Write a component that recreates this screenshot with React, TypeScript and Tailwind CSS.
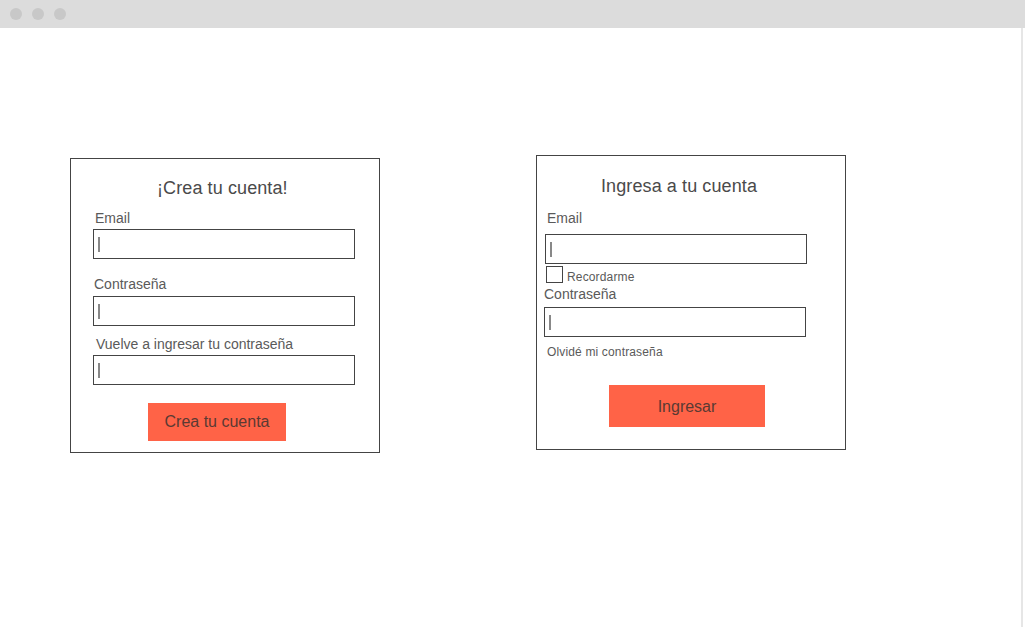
import React from "react";

function Field({ className }: { className: string }) {
  return (
    <div className={`h-[30px] w-[262px] border border-[#444] bg-white flex items-center ${className}`}>
      <div className="ml-[4px] h-[15px] w-[1.5px] bg-[#888]" />
    </div>
  );
}

export default function App() {
  return (
    <div className="w-[1025px] h-[627px] overflow-hidden bg-white font-['Liberation_Sans',Arial,sans-serif] flex flex-col">
      <div className="h-[28px] bg-[#dcdcdc] flex items-center gap-[10px] pl-[10px] shrink-0">
        <div className="w-[12px] h-[12px] rounded-full bg-[#c8c8c8]" />
        <div className="w-[12px] h-[12px] rounded-full bg-[#c8c8c8]" />
        <div className="w-[12px] h-[12px] rounded-full bg-[#c8c8c8]" />
      </div>
      <div className="flex-1 w-[1023px] border-r-2 border-[#e6e6e6] flex items-start pl-[70px]">
        {/* Register card */}
        <div className="mt-[130px] w-[310px] h-[295px] border border-[#444] flex flex-col items-start">
          <div className="mt-[19px] ml-[86px] text-[18px] leading-[20px] tracking-[0.1px] text-[#4a4a4a]">¡Crea tu cuenta!</div>
          <div className="mt-[12px] ml-[24px] text-[14px] leading-[16px] text-[#5a5a5a]">Email</div>
          <Field className="mt-[3px] ml-[22px]" />
          <div className="mt-[17px] ml-[23px] text-[14px] leading-[16px] text-[#5a5a5a]">Contraseña</div>
          <Field className="mt-[4px] ml-[22px]" />
          <div className="mt-[10px] ml-[25px] text-[14px] leading-[16px] text-[#5a5a5a]">Vuelve a ingresar tu contraseña</div>
          <Field className="mt-[3px] ml-[22px]" />
          <div className="mt-[18px] ml-[77px] w-[138px] h-[38px] bg-[#ff6347] flex items-center justify-center text-[16px] text-[#5a3a33]">
            Crea tu cuenta
          </div>
        </div>
        {/* Login card */}
        <div className="mt-[127px] ml-[156px] w-[310px] h-[295px] border border-[#444] flex flex-col items-start">
          <div className="mt-[20px] ml-[64px] text-[18px] leading-[20px] tracking-[0.1px] text-[#4a4a4a]">Ingresa a tu cuenta</div>
          <div className="mt-[14px] ml-[10px] text-[14px] leading-[16px] text-[#5a5a5a]">Email</div>
          <Field className="mt-[8px] ml-[8px]" />
          <div className="mt-[2px] ml-[9px] flex items-start">
            <div className="w-[17px] h-[17px] border border-[#444] bg-white" />
            <div className="ml-[4px] pt-[4px] text-[12px] leading-[14px] tracking-[0.15px] text-[#5a5a5a]">Recordarme</div>
          </div>
          <div className="mt-[2px] ml-[7px] text-[14px] leading-[16px] text-[#5a5a5a]">Contraseña</div>
          <Field className="mt-[5px] ml-[7px]" />
          <div className="mt-[8px] ml-[10px] text-[12px] leading-[14px] tracking-[0.15px] text-[#5a5a5a]">Olvidé mi contraseña</div>
          <div className="mt-[26px] ml-[72px] w-[156px] h-[42px] pt-[2px] bg-[#ff6347] flex items-center justify-center text-[16px] text-[#5a3a33]">
            Ingresar
          </div>
        </div>
      </div>
    </div>
  );
}
